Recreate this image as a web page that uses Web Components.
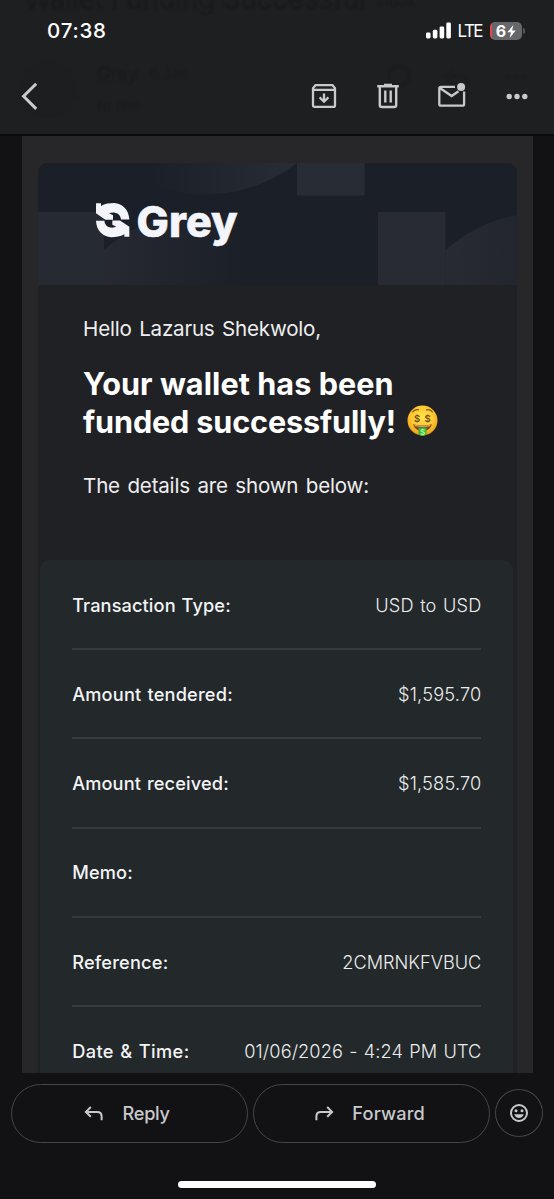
<!DOCTYPE html>
<html lang="en">
<head>
<meta charset="utf-8">
<title>Wallet Funding Successful</title>
<style>
html,body{margin:0;padding:0;background:#121214}
body{width:554px;height:1199px;overflow:hidden;font-family:Inter,"Liberation Sans",sans-serif;color:#e8e8ea}
</style>
</head>
<body>
<mail-screen></mail-screen>
<script>
const define=(name,html,after)=>{
  const t=document.createElement('template');
  t.innerHTML=html;
  customElements.define(name,class extends HTMLElement{
    connectedCallback(){
      if(this.shadowRoot)return;
      this.attachShadow({mode:'open'}).append(t.content.cloneNode(true));
      if(after)after(this);
    }
  });
};

/* One line of text tracked out (or in) to the width given by w. */
define('fit-text',`<style>:host{display:inline-block;white-space:nowrap;flex:none}</style><slot></slot>`,el=>{
  const w=parseFloat(el.getAttribute('w')),n=el.textContent.length-1;
  const s=(w-el.getBoundingClientRect().width)/n;
  el.style.letterSpacing=s+'px';
  el.style.marginRight=-s+'px';
});

define('status-bar',`<style>
:host{display:flex;justify-content:space-between;align-items:center;height:62px;padding:0 29px 0 47px;box-sizing:border-box;position:relative;color:#fff}
.time{font:500 20.5px/24px Inter,sans-serif}
.right{display:flex;align-items:center}
.lte{font:400 17px/20px Inter,sans-serif;margin:0 0 0 6px}
svg{display:block}
.bat{display:flex;align-items:center;margin-left:6.5px}
.cell{width:32px;height:18px;border-radius:5px;background:linear-gradient(90deg,#e5484a 0 2px,#66676a 2px);display:flex;align-items:center;justify-content:center;gap:1px;font:700 16px/18px Inter,sans-serif}
.nub{width:2px;height:6px;border-radius:0 2px 2px 0;background:#56575a;margin-left:1px}
.sig{margin-top:-2px}
</style>
<fit-text class="time" w="59">07:38</fit-text>
<div class="right">
<svg class="sig" width="26" height="17" viewBox="0 0 26 17" fill="#fff"><rect x="0" y="10.5" width="4.6" height="6" rx="1.4"/><rect x="6.8" y="7.8" width="4.6" height="8.7" rx="1.4"/><rect x="13.6" y="4.4" width="4.6" height="12.1" rx="1.4"/><rect x="20.3" y=".6" width="4.6" height="15.9" rx="1.4"/></svg>
<fit-text class="lte" w="26">LTE</fit-text>
<div class="bat"><div class="cell"><span>6</span><svg width="9" height="13" viewBox="0 0 9 13"><path d="M6.3 0L.3 7.3h3.6L2.7 13l6-7.5H5.1z" fill="#fff"/></svg></div><div class="nub"></div></div>
</div>`);

define('tool-bar',`<style>
:host{display:flex;align-items:center;height:68px;position:relative;padding:0 23.5px 0 20px}
svg{display:block;flex:none}
.grow{flex:1}
.set{display:flex;gap:36.2px;align-items:center}
</style>
<svg width="20" height="28" viewBox="0 0 20 28"><path d="M16.2 1.8L3.6 14.3l12.6 12.6" fill="none" stroke="#c9cacc" stroke-width="3"/></svg>
<div class="grow"></div>
<div class="set">
<svg width="28" height="28" viewBox="0 0 28 28" fill="none" stroke="#c8c9cb"><path d="M3 6.2L5.6 3.1H22.4L25 6.2V23.2Q25 24.9 23.3 24.9H4.7Q3 24.9 3 23.2Z" stroke-width="2.3" stroke-linejoin="round"/><path d="M3 7.9H25M14 11.5V19M9.6 15.4L14 19.7L18.4 15.4" stroke-width="2.3"/></svg>
<svg width="28" height="28" viewBox="0 0 28 28" fill="none" stroke="#c8c9cb"><path d="M3.2 4.2H24.8M10 3H18" stroke-width="2.4"/><path d="M5.8 4V23Q5.8 25 7.8 25H20.2Q22.2 25 22.2 23V4M11.3 8.5V20.5M16.7 8.5V20.5" stroke-width="2.4"/></svg>
<svg width="28" height="28" viewBox="0 0 28 28" fill="none" stroke="#c8c9cb"><path d="M17 4.8H3Q1.3 4.8 1.3 6.5V21.9Q1.3 23.6 3 23.6H24.4Q26.1 23.6 26.1 21.9V9.5M1.8 6L13.7 14L20.5 9.3" stroke-width="2.3"/><circle cx="23.1" cy="4.9" r="4" fill="#c8c9cb" stroke="none"/></svg>
<svg width="28" height="28" viewBox="0 0 28 28" fill="#c8c9cb"><circle cx="6.2" cy="14.5" r="2.7"/><circle cx="14" cy="14.5" r="2.7"/><circle cx="21.8" cy="14.5" r="2.7"/></svg>
</div>`);

/* Blurred message header that shows faintly through the translucent bar. */
define('under-header',`<style>
:host{position:absolute;inset:0;overflow:hidden;color:#18191b;filter:blur(.8px)}
.t{position:absolute;left:24px;top:-18px;font:400 28px/34px Inter,sans-serif}
.i{position:absolute;left:376px;top:-7px;font:400 15px/18px Inter,sans-serif}
.a{position:absolute;left:21px;top:63px;width:54px;height:54px;border-radius:50%;background:#1d1e20}
.g{position:absolute;left:97px;top:63px;font:500 18px/22px Inter,sans-serif;color:#191a1c}
.d{position:absolute;left:149px;top:65px;font:400 15px/18px Inter,sans-serif;color:#1a1b1d}
.m{position:absolute;left:97px;top:95px;font:400 16px/20px Inter,sans-serif;color:#1a1b1d}
svg{position:absolute;left:386px;top:62px}
</style>
<fit-text class="t" w="342">Wallet Funding Successful</fit-text><span class="i">Inbox</span>
<div class="a"></div><span class="g">Grey</span><span class="d">6 Jan</span><span class="m">to me</span>
<svg width="144" height="30" fill="none" stroke="#1b1c1e" stroke-width="2"><circle cx="13" cy="14" r="10"/><path d="M66 8l-7 6 7 6M59 14h16q6 0 6 8"/><path d="M120 15h20" stroke-dasharray="4 4" stroke-width="4"/></svg>`);

define('top-chrome',`<style>:host{display:block;position:relative;height:134px;background:#1e1f21;flex:none;border-bottom:2px solid #0b0b0c}</style>
<under-header></under-header><status-bar></status-bar><tool-bar></tool-bar>`);

define('brand-banner',`<style>
:host{display:flex;position:relative;height:122px;border-radius:10px 10px 0 0;overflow:hidden;background:#1b1f27}
.art{position:absolute;inset:0}
.brand{position:relative;display:flex;padding:34px 0 0 57px}
.mark{margin-top:5px;display:block}
.name{font:800 43px/52px Inter,sans-serif;-webkit-text-stroke:.6px #f4f4fb;color:#f4f4fb;margin-left:5.7px;margin-top:-2px}
</style>
<svg class="art" width="479" height="122" viewBox="38 163 479 122">
<defs>
<linearGradient id="a" gradientUnits="userSpaceOnUse" x1="150" x2="295" y1="0" y2="0"><stop offset="0" stop-color="#282c34" stop-opacity="0"/><stop offset="1" stop-color="#282c34"/></linearGradient>
<linearGradient id="b" gradientUnits="userSpaceOnUse" x1="95" x2="245" y1="0" y2="0"><stop offset="0" stop-color="#272a33"/><stop offset="1" stop-color="#272a33" stop-opacity="0"/></linearGradient>
<linearGradient id="c" gradientUnits="userSpaceOnUse" x1="445" x2="540" y1="0" y2="0"><stop offset="0" stop-color="#282b33"/><stop offset="1" stop-color="#20242e"/></linearGradient>
</defs>
<circle cx="205" cy="44.5" r="150" fill="url(#a)"/>
<rect x="297" y="163" width="67.5" height="32.5" fill="#282c34"/>
<rect x="38" y="212" width="66" height="73" fill="#262a32"/>
<path d="M104 285V250A150 150 0 0 1 204 212H300V285Z" fill="url(#b)"/>
<rect x="378" y="212" width="67.5" height="73" fill="#282b33"/>
<path d="M445.4 285V250.2A150 150 0 0 1 517 215V285Z" fill="url(#c)"/>
</svg>
<div class="brand">
<svg class="mark" width="36" height="36" viewBox="226 215 108 108" fill="#f4f4fb"><path id="h" d="M229 219H244V227C255 220 270 218 283 218C310 219 328 240 329 267.5H304C303 256 297 249 286 247C279 246 273 247 268 249L280 255V268H257L229 249Z"/><use href="#h" transform="rotate(180 279 269.3)"/></svg>
<fit-text class="name" w="101.2">Grey</fit-text>
</div>`);

define('money-face',`<style>:host{display:inline-block;width:31px;height:31px}svg{display:block}</style>
<svg width="31" height="31" viewBox="0 0 31 31"><defs><radialGradient id="f" cx=".5" cy=".4" r=".6"><stop offset="0" stop-color="#ffe24c"/><stop offset=".65" stop-color="#fcc62f"/><stop offset="1" stop-color="#ee9a1b"/></radialGradient></defs>
<circle cx="15.5" cy="15.5" r="15" fill="url(#f)"/>
<path d="M5.7 6.8Q8 4 11.5 4.8M19.5 4.8Q23 4 25.3 6.8" fill="none" stroke="#8a5310" stroke-width="1.2" stroke-linecap="round"/>
<g font-family="Inter,sans-serif" font-size="9.5" font-weight="600" fill="#6b4a12" text-anchor="middle"><text x="10.1" y="16.8">$</text><text x="20.7" y="16.8">$</text></g>
<path d="M6 19.3Q15.5 21.7 25 19.3Q23 26.2 15.5 26.2Q8 26.2 6 19.3Z" fill="#85471a"/>
<path d="M7.3 19.7Q15.5 21.7 23.7 19.7L23 21.3Q15.5 22.8 8 21.3Z" fill="#d9a860"/>
<path d="M11.5 22.4H19.5V28Q19.5 31 15.5 31Q11.5 31 11.5 28Z" fill="#38b33a"/>
<text x="15.5" y="29.6" font-family="Inter,sans-serif" font-size="8" font-weight="700" fill="#b4f28b" text-anchor="middle">$</text></svg>`);

define('mail-intro',`<style>
:host{display:block;height:275px;padding-left:45.3px;overflow:hidden}
.p{display:block;font:400 20.6px/26px Inter,sans-serif;color:#eeeef0;word-spacing:2px}
.first{margin-top:31px}
h1{margin:23px 0 0;font:700 30.6px/37.6px Inter,sans-serif;color:#fff}
.line{display:flex;align-items:center;height:37.6px}
money-face{margin:-2px 0 0 10.5px}
.last{margin-top:32.6px}
</style>
<div class="p first"><fit-text w="238">Hello Lazarus Shekwolo,</fit-text></div>
<h1><div class="line"><fit-text w="310.5">Your wallet has been</fit-text></div>
<div class="line"><fit-text w="313">funded successfully!</fit-text><money-face></money-face></div></h1>
<div class="p last"><fit-text w="286">The details are shown below:</fit-text></div>`);

define('detail-row',`<style>
:host{display:flex;justify-content:space-between;align-items:center;height:89.2px;box-sizing:border-box;border-bottom:2px solid #373a3e;padding-top:.4px;line-height:24px;font-size:18.2px;word-spacing:1px}
:host([last]){border-bottom:0;padding-bottom:2px}
.k{font-weight:500;color:#f3f4f5;padding-left:.4px}
.v{font-weight:300;color:#eceded}
</style><span class="k"><slot name="k"></slot></span><span class="v"><slot name="v"></slot></span>`);

define('detail-panel',`<style>:host{display:block;margin:0 3.5px 0 2px;height:560px;padding:1px 32px 0;background:#23282b;border-radius:10px 10px 0 0}</style><slot></slot>`);

define('mail-card',`<style>
:host{display:block;flex:none;width:479px;margin:27px auto 0 16.1px;background:#202124;border-radius:10px 10px 0 0}
</style>
<brand-banner></brand-banner><mail-intro></mail-intro>
<detail-panel>
<detail-row><fit-text slot="k" w="158.5">Transaction Type:</fit-text><fit-text slot="v" w="106">USD to USD</fit-text></detail-row>
<detail-row><fit-text slot="k" w="160.5">Amount tendered:</fit-text><fit-text slot="v" w="83.3">$1,595.70</fit-text></detail-row>
<detail-row><fit-text slot="k" w="156.5">Amount received:</fit-text><fit-text slot="v" w="83.3">$1,585.70</fit-text></detail-row>
<detail-row><fit-text slot="k" w="60.5">Memo:</fit-text></detail-row>
<detail-row><fit-text slot="k" w="96">Reference:</fit-text><fit-text slot="v" w="139">2CMRNKFVBUC</fit-text></detail-row>
<detail-row last><fit-text slot="k" w="117">Date &amp; Time:</fit-text><fit-text slot="v" w="237">01/06/2026 - 4:24 PM UTC</fit-text></detail-row>
</detail-panel>`);

define('pill-button',`<style>
:host{display:flex;align-items:center;box-sizing:border-box;width:237px;height:59px;border:1.5px solid #454649;border-radius:30px;color:#c8c9cb;font:500 18.2px/24px Inter,sans-serif;padding:0 0 2px 72px;gap:18.5px}
:host([round]){width:48px;height:48px;padding:0;justify-content:center;border-radius:50%;margin-top:-1px}
</style><slot></slot>`);

define('reply-bar',`<style>
:host{display:flex;flex-direction:column;align-items:center;height:126px;flex:none}
.row{display:flex;align-items:center;gap:5.3px;width:532px;margin-top:11px;height:59px;flex:none}
.home{width:198px;height:7px;border-radius:4px;background:#fff;margin-top:38px}
svg{display:block;flex:none}
.ar{margin-top:2px}
</style>
<div class="row">
<pill-button><svg class="ar" width="20" height="18" viewBox="0 0 20 18"><path d="M6.8 2L1.9 6.9L6.8 11.8M2 6.9H13.2Q17.6 6.9 17.6 11.3V15.2" fill="none" stroke="#c8c9cb" stroke-width="2"/></svg><fit-text w="47.5">Reply</fit-text></pill-button>
<pill-button style="padding-left:59.8px"><svg class="ar" width="20" height="18" viewBox="0 0 20 18"><path d="M13.2 2L18.1 6.9L13.2 11.8M18 6.9H6.8Q2.4 6.9 2.4 11.3V15.2" fill="none" stroke="#c8c9cb" stroke-width="2"/></svg><fit-text w="72.5">Forward</fit-text></pill-button>
<pill-button round><svg width="20" height="20" viewBox="0 0 20 20"><circle cx="10" cy="10" r="8" fill="none" stroke="#c8c9cb" stroke-width="2"/><circle cx="7" cy="7.8" r="1.5" fill="#c8c9cb"/><circle cx="13" cy="7.8" r="1.5" fill="#c8c9cb"/><path d="M5.2 11.3H14.8Q13.5 15 10 15Q6.5 15 5.2 11.3Z" fill="#c8c9cb"/></svg></pill-button>
</div>
<div class="home"></div>`);

define('mail-screen',`<style>
:host{display:flex;flex-direction:column;width:554px;height:1199px;background:#121214;overflow:hidden}
.frame{flex:1;min-height:0;overflow:hidden;width:511px;margin-left:21.7px;background:#272628;display:flex;flex-direction:column}
</style>
<top-chrome></top-chrome><div class="frame"><mail-card></mail-card></div><reply-bar></reply-bar>`);
</script>
</body>
</html>
